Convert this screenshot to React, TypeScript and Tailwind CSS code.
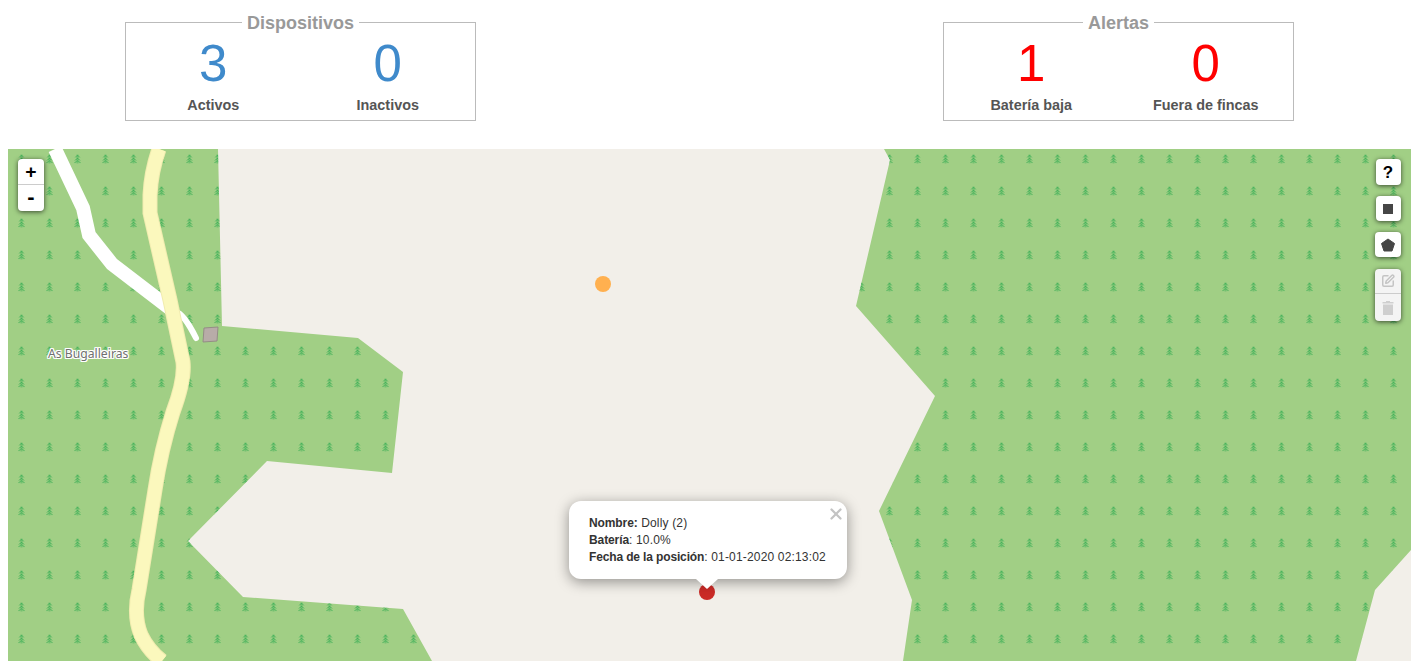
import type { ReactNode } from 'react'
import { SquarePen, X } from 'lucide-react'

const FOREST_LEFT = 'M8 149 L218 149 L222 326 L358 338 L403 372 L392 473 L267 461 L188 541 L243 597 L403 609 L432 661 L8 661 Z'
const FOREST_RIGHT = 'M884 149 L890 160 L856 306 L935 396 L879 511 L912 600 L903 661 L1356 661 L1375 590 L1411 550 L1411 149 Z'
const MAIN_ROAD = 'M159 149 Q151 172 150 195 L150 213 L170 300 L183 362 Q185 380 173 412 Q161 450 155 490 L139 590 Q133 615 141 635 Q148 650 162 661'

function StatBox({ title, color, items }: { title: string; color: string; items: { value: number; label: string }[] }) {
  return (
    <fieldset className="h-[110px] w-[351px] border border-[#bbb] px-0">
      <legend className="mx-auto px-[5px] pt-[2px] text-[18px] leading-[20px] font-bold text-[#999]">{title}</legend>
      <div className="mt-[1px] grid grid-cols-2 text-center">
        {items.map((item) => (
          <div key={item.label}>
            <div className={`text-[51px] leading-[60px] ${color}`}>{item.value}</div>
            <div className="mt-[1px] text-[14.4px] leading-[20px] font-bold text-[#555]">{item.label}</div>
          </div>
        ))}
      </div>
    </fieldset>
  )
}

function MapDrawing() {
  return (
    <svg className="absolute inset-0 h-full w-full" viewBox="8 149 1403 512">
      <defs>
        <pattern id="trees" x="15.5" y="153" width="28" height="32" patternUnits="userSpaceOnUse">
          {/* one fir, drawn around the middle of a 12px cell */}
          <g fill="none" stroke="#45b25a" strokeWidth="1" transform="translate(6 6)">
            <path d="M0 -4.5 V4.5" />
            <path d="M-2 -1.5 L0 -4 L2 -1.5" />
            <path d="M-2.5 1.5 L0 -1 L2.5 1.5" />
            <path d="M-3 4 L0 1.5 L3 4" />
          </g>
        </pattern>
      </defs>
      <path d={FOREST_LEFT} fill="#a1cf85" />
      <path d={FOREST_RIGHT} fill="#a1cf85" />
      <path d={FOREST_LEFT} fill="url(#trees)" />
      <path d={FOREST_RIGHT} fill="url(#trees)" />
      <path d="M55 149 L83 208 L89 235 L112 264 L172 310" fill="none" stroke="#fff" strokeWidth="14" />
      <path d="M172 311 L176 312 Q184 314 196 338" fill="none" stroke="#fff" strokeWidth="6" strokeLinecap="round" />
      <path d={MAIN_ROAD} fill="none" stroke="#f1ecb0" strokeWidth="15" />
      <path d={MAIN_ROAD} fill="none" stroke="#fbf8bd" strokeWidth="13" />
      <path d="M204 328 L218 327 L217 341 L203 342 Z" fill="#b8aca8" stroke="#948d85" />
      <circle cx="603" cy="284" r="8" fill="#ffb04f" />
      <circle cx="707" cy="592" r="8" fill="#cb2b27" />
    </svg>
  )
}

function LeafletButton({ children, className }: { children: ReactNode; className?: string }) {
  return (
    <div className={`flex items-center justify-center rounded-[4px] bg-white shadow-[0_1px_5px_rgba(0,0,0,0.65)] ${className ?? ''}`}>
      {children}
    </div>
  )
}

export default function App() {
  return (
    <div className="h-[661px] overflow-hidden bg-white font-['Liberation_Sans',Arial,sans-serif]">
      <div className="flex h-[149px] items-start justify-between pt-[11px] pr-[123px] pl-[125px]">
        <StatBox
          title="Dispositivos"
          color="text-[#3f8acb]"
          items={[
            { value: 3, label: 'Activos' },
            { value: 0, label: 'Inactivos' },
          ]}
        />
        <StatBox
          title="Alertas"
          color="text-[#ff0000]"
          items={[
            { value: 1, label: 'Batería baja' },
            { value: 0, label: 'Fuera de fincas' },
          ]}
        />
      </div>

      <div className="relative mr-[6px] ml-[8px] h-[512px] overflow-hidden bg-[#f2efe9]">
        <MapDrawing />

        <span className="absolute top-[197px] left-[40px] font-['Noto_Sans',sans-serif] text-[12.2px] leading-[16px] text-[#707070] [text-shadow:1px_0_0_#fff,-1px_0_0_#fff,0_1px_0_#fff,0_-1px_0_#fff,1px_1px_0_#fff,-1px_-1px_0_#fff,1px_-1px_0_#fff,-1px_1px_0_#fff]">
          As Bugalleiras
        </span>

        {/* zoom control */}
        <div className="absolute top-[10px] left-[10px] flex w-[26px] flex-col rounded-[4px] bg-white font-['DejaVu_Sans_Mono',monospace] text-[18px] leading-none font-bold text-black shadow-[0_1px_5px_rgba(0,0,0,0.65)]">
          <div className="flex h-[26px] items-center justify-center border-b border-[#ccc]">+</div>
          <div className="flex h-[26px] items-center justify-center">-</div>
        </div>

        {/* draw toolbar */}
        <div className="absolute top-[10px] right-[10px] flex w-[26px] flex-col items-center">
          <LeafletButton className="h-[26px] w-[25px] text-[17px] leading-none font-bold text-black">?</LeafletButton>
          <LeafletButton className="mt-[11px] h-[25px] w-[25px]">
            <div className="h-[10px] w-[10px] bg-[#464646]" />
          </LeafletButton>
          <LeafletButton className="mt-[11px] h-[25px] w-[26px]">
            <svg width="14" height="14" viewBox="0 0 14 14">
              <path d="M7 1 L13.5 5.5 L11 13 L3 13 L0.5 5.5 Z" fill="#464646" strokeLinejoin="round" stroke="#464646" />
            </svg>
          </LeafletButton>
          <div className="mt-[12px] flex w-[26px] flex-col rounded-[4px] bg-[#f4f4f4] text-[#c4c4c4] shadow-[0_1px_5px_rgba(0,0,0,0.65)]">
            <div className="flex h-[25px] items-center justify-center border-b border-[#ccc]">
              <SquarePen size={14} strokeWidth={2.5} />
            </div>
            <div className="flex h-[27px] items-center justify-center">
              <svg width="12" height="14" viewBox="0 0 12 14" fill="#cfcfcf">
                <path d="M4 0 H8 V1 H11.5 V2.5 H0.5 V1 H4 Z" />
                <path d="M1 3.5 H11 V14 H1 Z" />
              </svg>
            </div>
          </div>
        </div>

        {/* popup */}
        <div className="absolute top-[352px] left-[561px] h-[78px] w-[278px] rounded-[12px] bg-white px-[20px] py-[14px] text-[12px] leading-[17px] tracking-[0.17px] whitespace-nowrap text-[#333] shadow-[0_3px_14px_rgba(0,0,0,0.4)]">
          <X size={18} strokeWidth={3} className="absolute top-[4px] right-[2px] text-[#c3c3c3]" />
          <div><b className="tracking-[-0.1px]">Nombre:</b> Dolly (2)</div>
          <div><b className="tracking-[-0.1px]">Batería</b>: 10.0%</div>
          <div><b className="tracking-[-0.14px]">Fecha de la posición</b>: 01-01-2020 02:13:02</div>
        </div>
        <div className="absolute top-[430px] left-[688px] h-0 w-0 border-x-[11px] border-t-[10px] border-x-transparent border-t-white" />
      </div>
    </div>
  )
}
